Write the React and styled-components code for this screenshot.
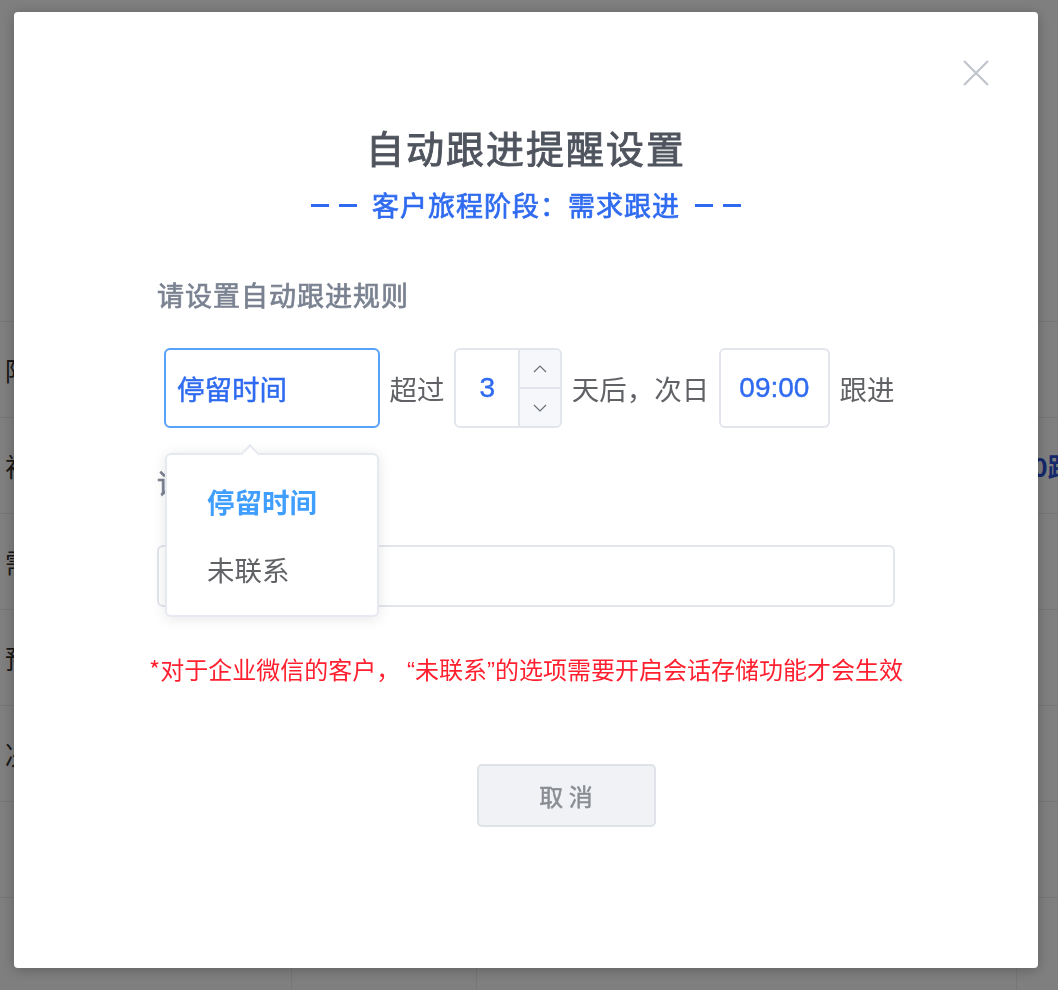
import React from 'react'
import styled, { createGlobalStyle } from 'styled-components'

const blue = '#2f6bf0'
const lightBlue = '#409eff'
const line = '#e2e5ec'

const GlobalStyle = createGlobalStyle`
  html, body {
    margin: 0;
    padding: 0;
    font-family: "Noto Sans CJK SC", "Liberation Sans", sans-serif;
    background: #fff;
  }
`

export default () => (
  <>
    <GlobalStyle />
    <Backdrop />
    <Mask />
    <Dialog>
      <Close aria-label="close">
        <svg width="26" height="26" viewBox="0 0 26 26">
          <path d="M1 1 L25 25 M25 1 L1 25" stroke="#c0c4cc" strokeWidth="2.2" fill="none" />
        </svg>
      </Close>
      <Title>自动跟进提醒设置</Title>
      <Subtitle>
        <Dash />
        <Dash />
        <StageText>客户旅程阶段：需求跟进</StageText>
        <Dash />
        <Dash />
      </Subtitle>
      <Body>
        <Label>请设置自动跟进规则</Label>
        <RuleRow>
          <SelectWrap>
            <Select>停留时间</Select>
            <Dropdown>
              <Option active>停留时间</Option>
              <Option>未联系</Option>
            </Dropdown>
          </SelectWrap>
          <Word>超过</Word>
          <Stepper>
            <StepValue>3</StepValue>
            <StepButtons>
              <StepButton>
                <Chevron d="M1 7 L7 1 L13 7" />
              </StepButton>
              <StepButton>
                <Chevron d="M1 1 L7 7 L13 1" />
              </StepButton>
            </StepButtons>
          </Stepper>
          <Word>天后，次日</Word>
          <TimeBox>09:00</TimeBox>
          <Word>跟进</Word>
        </RuleRow>
        <Label second>请输入提醒内容</Label>
        <TextInput />
      </Body>
      <Notice>
        *对于企业微信的客户，<Quote> “</Quote>未联系<Quote>”</Quote>的选项需要开启会话存储功能才会生效
      </Notice>
      <Footer>
        <CancelButton>取 消</CancelButton>
      </Footer>
    </Dialog>
  </>
)

const Chevron = ({ d }) => (
  <svg width="14" height="8" viewBox="0 0 14 8">
    <path d={d} stroke="#6b6f76" strokeWidth="1.2" fill="none" />
  </svg>
)

// table page sitting under the mask
const Backdrop = () => (
  <PageTable>
    <HeadArea />
    {rows.map((r, i) => (
      <TableRow key={i}>
        <Cell>{r.name}</Cell>
        <Cell>{r.owner}</Cell>
        <Cell />
        <CountCell>{r.count}</CountCell>
      </TableRow>
    ))}
  </PageTable>
)

const rows = [
  { name: '陌生线索', owner: '王磊', count: '' },
  { name: '初步接触', owner: '李娜', count: '10跟进中' },
  { name: '需求跟进', owner: '张伟', count: '' },
  { name: '预约演示', owner: '刘洋', count: '' },
  { name: '决策阶段', owner: '陈静', count: '' },
  { name: '', owner: '', count: '' },
  { name: '', owner: '', count: '' },
]

const PageTable = styled.div`
  width: 1058px;
  height: 990px;
  overflow: hidden;
`

const HeadArea = styled.div`
  height: 322px;
  border-bottom: 1px solid #ebeef5;
  box-sizing: border-box;
`

const TableRow = styled.div`
  display: grid;
  grid-template-columns: 292px 185px 540px 1fr;
  height: 96px;
  border-bottom: 1px solid #ebeef5;
  box-sizing: border-box;
`

const Cell = styled.div`
  display: flex;
  align-items: center;
  padding-left: 5px;
  font-size: 26px;
  color: #333;
  border-right: 1px solid #ebeef5;
`

const CountCell = styled.div`
  display: flex;
  align-items: center;
  font-size: 26px;
  font-weight: 700;
  color: #2a50d8;
  white-space: nowrap;
`

const Mask = styled.div`
  position: fixed;
  inset: 0;
  background: rgba(0, 0, 0, 0.5);
`

const Dialog = styled.div`
  position: fixed;
  left: 14px;
  top: 12px;
  width: 1024px;
  height: 956px;
  background: #fff;
  border-radius: 4px;
  box-shadow: 0 2px 14px rgba(0, 0, 0, 0.25);
  display: flex;
  flex-direction: column;
  align-items: center;
`

const Close = styled.div`
  position: absolute;
  top: 48px;
  right: 49px;
  width: 26px;
  height: 26px;
  display: flex;
  cursor: pointer;
`

/* medium weight: regular face thickened with a thin stroke */
const Title = styled.h2`
  margin: 112px 0 0;
  height: 46px;
  line-height: 46px;
  font-size: 38px;
  font-weight: 400;
  letter-spacing: 2px;
  color: #4f545e;
  -webkit-text-stroke: 0.9px #4f545e;
`

const Subtitle = styled.div`
  margin-top: 17px;
  height: 36px;
  display: flex;
  align-items: center;
  gap: 10px;
  color: ${blue};
`

const Dash = styled.span`
  display: block;
  width: 18px;
  height: 3px;
  background: currentColor;
`

const StageText = styled.span`
  margin: 0 5px;
  font-size: 27px;
  font-weight: 400;
  letter-spacing: 1px;
  line-height: 36px;
  -webkit-text-stroke: 0.7px ${blue};
`

const Body = styled.div`
  width: 738px;
  display: flex;
  flex-direction: column;
`

const Label = styled.div`
  margin-top: ${p => (p.second ? '38px' : '55px')};
  height: 34px;
  line-height: 34px;
  font-size: 27px;
  font-weight: 400;
  letter-spacing: 1px;
  color: #7a8291;
  -webkit-text-stroke: 0.7px #7a8291;
`

const RuleRow = styled.div`
  margin-top: 36px;
  margin-left: 7px;
  display: flex;
  align-items: center;
  gap: 9.6px;
  position: relative;
  z-index: 2;
`

const SelectWrap = styled.div`
  position: relative;
`

const Select = styled.div`
  width: 216px;
  height: 80px;
  box-sizing: border-box;
  border: 2px solid #56a3f7;
  border-radius: 6px;
  padding-left: 11px;
  display: flex;
  align-items: center;
  font-size: 27.5px;
  color: ${blue};
  -webkit-text-stroke: 0.5px ${blue};
`

const Dropdown = styled.div`
  position: absolute;
  left: 1px;
  top: 105px;
  width: 214px;
  box-sizing: border-box;
  padding: 12px 0;
  background: #fff;
  border: 2px solid #e6e9ef;
  border-radius: 6px;
  box-shadow: 0 2px 14px rgba(0, 0, 0, 0.1);

  &::before {
    content: '';
    position: absolute;
    left: 76px;
    top: -8px;
    width: 12px;
    height: 12px;
    background: #fff;
    border-top: 2px solid #e6e9ef;
    border-left: 2px solid #e6e9ef;
    transform: rotate(45deg);
  }
`

const Option = styled.div`
  height: 68px;
  display: flex;
  align-items: center;
  padding-left: 40px;
  font-size: 27.5px;
  font-weight: ${p => (p.active ? 700 : 400)};
  color: ${p => (p.active ? lightBlue : '#606266')};
`

const Word = styled.span`
  font-size: 27.5px;
  color: #606266;
  white-space: nowrap;
`

const Stepper = styled.div`
  width: 108px;
  height: 80px;
  box-sizing: border-box;
  border: 2px solid ${line};
  border-radius: 6px;
  display: flex;
  overflow: hidden;
`

const StepValue = styled.div`
  flex: 1;
  display: flex;
  align-items: center;
  justify-content: center;
  font-family: "Liberation Sans", sans-serif;
  font-size: 28px;
  color: ${blue};
  -webkit-text-stroke: 0.4px ${blue};
`

const StepButtons = styled.div`
  width: 40px;
  border-left: 2px solid ${line};
  background: #f5f7fa;
  display: flex;
  flex-direction: column;
`

const StepButton = styled.div`
  flex: 1;
  display: flex;
  align-items: center;
  justify-content: center;
  & + & {
    border-top: 2px solid ${line};
  }
`

const TimeBox = styled.div`
  width: 111px;
  height: 80px;
  box-sizing: border-box;
  border: 2px solid ${line};
  border-radius: 6px;
  display: flex;
  align-items: center;
  justify-content: center;
  font-family: "Liberation Sans", sans-serif;
  font-size: 28px;
  color: ${blue};
  -webkit-text-stroke: 0.4px ${blue};
`

const TextInput = styled.div`
  margin-top: 45px;
  height: 62px;
  box-sizing: border-box;
  border: 2px solid ${line};
  border-radius: 6px;
`

const Notice = styled.div`
  margin-top: 46px;
  height: 32px;
  line-height: 32px;
  font-size: 24px;
  color: #ff1f2f;
  white-space: nowrap;
`

const Quote = styled.span`
  font-family: "Liberation Sans", sans-serif;
  white-space: pre;
`

const Footer = styled.div`
  margin-top: 79px;
  padding-left: 80px;
  display: flex;
  justify-content: center;
`

const CancelButton = styled.button`
  width: 179px;
  height: 63px;
  box-sizing: border-box;
  background: #f0f2f5;
  border: 2px solid #dfe2e8;
  border-radius: 5px;
  font-family: "Noto Sans CJK SC", sans-serif;
  font-size: 24px;
  color: #8a8d93;
  -webkit-text-stroke: 0.5px #8a8d93;
  cursor: pointer;
`
